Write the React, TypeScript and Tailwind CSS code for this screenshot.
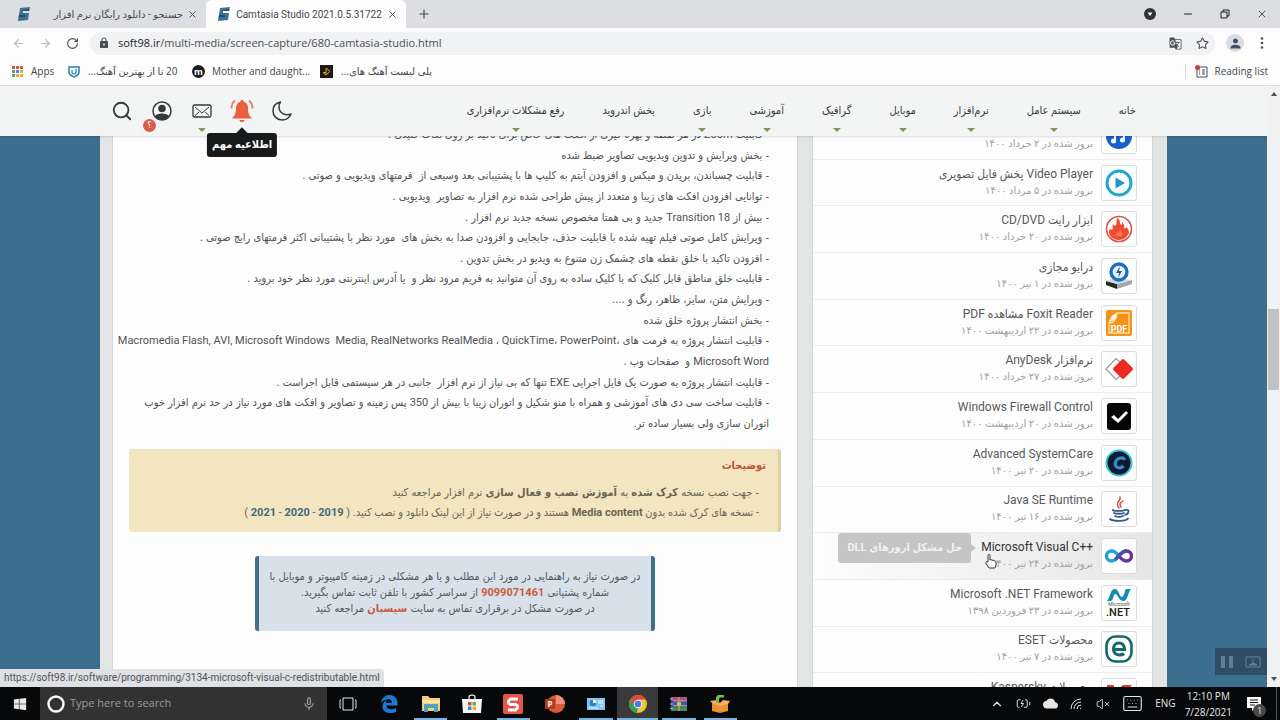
import type { ReactNode } from "react";
import {
  ArrowLeft,
  ArrowRight,
  BatteryCharging,
  ChevronUp,
  Keyboard,
  Minus,
  Plus,
  RotateCw,
  Search,
  Star,
  VolumeX,
  X,
} from "lucide-react";
import { FaWindows } from "react-icons/fa";
import { MdCloud, MdGTranslate, MdLock, MdMicNone, MdPerson } from "react-icons/md";

const menu = [
  { label: "خانه", hasSub: false },
  { label: "سیستم عامل", hasSub: true },
  { label: "نرم‌افزار", hasSub: true },
  { label: "موبایل", hasSub: true },
  { label: "گرافیک", hasSub: true },
  { label: "آموزشی", hasSub: true },
  { label: "بازی", hasSub: true },
  { label: "بخش اندروید", hasSub: false },
  { label: "رفع مشکلات نرم‌افزاری", hasSub: true },
];

function Latin({ children }: { children: ReactNode }) {
  return (
    <bdi dir="ltr" className="font-['Roboto','DejaVu_Sans_Condensed',sans-serif]">
      {children}
    </bdi>
  );
}

const features: ReactNode[] = [
  <>
    - قابلیت <Latin>Zoom</Latin> در هر نقطه و بهره گیری از افکت های خاص برای تاکید بر روی نکات کلیدی .
  </>,
  "- بخش ویرایش و تدوین ویدیویی تصاویر ضبط شده",
  "- قابلیت چسباندن، بریدن و میکس و افزودن آیتم به کلیپ ها با پشتیبانی بعد وسیعی از  فرمتهای ویدیویی و صوتی .",
  "- توانایی افزودن افکت های زیبا و متعدد از پیش طراحی شده نرم افزار به تصاویر  ویدیویی .",
  <>
    - بیش از <Latin>Transition 18</Latin> جدید و بی همتا مخصوص نسخه جدید نرم افزار .
  </>,
  "- ویرایش کامل صوتی فیلم تهیه شده با قابلیت حذف، جابجایی و افزودن صدا به بخش های  مورد نظر با پشتیبانی اکثر فرمتهای رایج صوتی .",
  "- افزودن تاکید با خلق نقطه های چشمک زن متنوع به ویدیو در بخش تدوین .",
  "- قابلیت خلق مناطق قابل کلیک که با کلیک ساده به روی آن متوانید به فریم مرود نظر و  یا آدرس اینترنتی مورد نظر خود بروید .",
  "- ویرایش متن، سایز، ظاهر، رنگ و ....",
  "- بخش انتشار پروژه خلق شده",
  <>
    - قابلیت انتشار پروژه به فرمت های{" "}
    <Latin>
      {"Macromedia Flash, AVI, Microsoft Windows  Media, RealNetworks RealMedia ، QuickTime، PowerPoint،"}
    </Latin>
  </>,
  <>
    <Latin>Microsoft Word</Latin>
    {" و  صفحات وب ."}
  </>,
  <>
    - قابلیت انتشار پروژه به صورت یک فایل اجرایی <Latin>EXE</Latin>
    {" تنها که بی نیاز از نرم افزار  جانبی در هر سیستمی قابل اجراست ."}
  </>,
  <>
    - قابلیت ساخت سی دی های آموزشی و همراه با منو شکیل و اتوران زیبا با بیش از <Latin>350</Latin>
    {" پس زمینه و تصاویر و افکت های مورد نیاز در حد نرم افزار خوب"}
  </>,
  "اتوران سازی ولی بسیار ساده تر.",
];

function MusicIcon() {
  return (
    <svg viewBox="0 0 28 28" className="size-7">
      <circle cx="14" cy="14" r="13" fill="#1a62cc" />
      <path d="M10 19V9l9-2v10" fill="none" stroke="#fff" strokeWidth="2" />
      <circle cx="8.500" cy="19" r="2.500" fill="#fff" />
      <circle cx="17.500" cy="18" r="2.500" fill="#fff" />
    </svg>
  );
}

function PlayerIcon() {
  return (
    <svg viewBox="0 0 28 28" className="size-7">
      <circle cx="14" cy="14" r="12" fill="#fff" stroke="#22a7cf" strokeWidth="3" />
      <path d="M10.500 8.500 20 14l-9.500 5.500z" fill="#2196c8" />
    </svg>
  );
}

function BurnIcon() {
  return (
    <svg viewBox="0 0 28 28" className="size-7">
      <circle cx="14" cy="14" r="12.500" fill="#fff" stroke="#d8524a" strokeWidth="1.600" />
      <path
        d="M4 18c0-2 0-3 1-4 1 1 2 1 3 0 0-2-1-3 0-5 1 2 2 2 3 1 1-2 0-4 1-7 4 2 2 5 4 7 1 0 1-1 1-3 2 2 3 4 2 6 1 1 2 0 2-1 2 1 3 4 3 6-2 4-5 7-10 7s-9-3-10-7z"
        fill="#ef4b30"
      />
      <path d="M10 21c0-2 2-2 2-4 1 0 1 1 2 1 1-1 0-2 1-3 2 2 3 3 2 6z" fill="#f37a62" />
    </svg>
  );
}

function DriveIcon() {
  return (
    <svg viewBox="0 0 28 28" className="size-7">
      <path d="M1 19 12 22v5L1 23z" fill="#1c2a2a" />
      <path d="m12 22 15-4v4l-15 5z" fill="#a2a8ac" />
      <path d="m1 19 9-3 17 2-15 4z" fill="#d3d7da" />
      <circle cx="14" cy="10" r="8" fill="#e9f6ff" stroke="#1671c4" strokeWidth="3.400" />
      <path d="m15 4-4 7h3l-1 5 4-7h-3z" fill="#1a5ea8" />
    </svg>
  );
}

function FoxitIcon() {
  return (
    <svg viewBox="0 0 28 28" className="size-7">
      <rect x="1" y="1" width="26" height="26" rx="2" fill="#f39215" />
      <path d="M12 4h12v20H4V14c5 0 8-4 8-10z" fill="none" stroke="#fde3b8" strokeWidth="1.300" />
      <path d="M4 13C5 8 8 5 12 4c0 5-3 8-8 9z" fill="#fff2dc" />
      <text x="14" y="23" textAnchor="middle" fontSize="9" fontWeight="700" fill="#fff" fontFamily="Roboto, sans-serif">
        PDF
      </text>
    </svg>
  );
}

function AnyDeskIcon() {
  return (
    <svg viewBox="0 0 28 28" className="size-7">
      <path d="M15 7 11 3.500 1 14l10 10.500 4-3.500" fill="none" stroke="#9a9a9a" strokeWidth="1.200" />
      <rect x="10.500" y="6.500" width="15" height="15" rx="2" transform="rotate(45 18 14)" fill="#ee2a24" />
    </svg>
  );
}

function FirewallIcon() {
  return (
    <svg viewBox="0 0 28 28" className="size-7">
      <rect x="2" y="1" width="24" height="27" rx="3" fill="#050505" />
      <path d="m6 15 3-2 4 4 8-8 2 2-10 10z" fill="#fff" />
    </svg>
  );
}

function SystemCareIcon() {
  return (
    <svg viewBox="0 0 28 28" className="size-7">
      <circle cx="14" cy="14" r="12.500" fill="#0c1a2c" stroke="#35c3e0" strokeWidth="2" />
      <path d="M19.500 11c-1-3-7-3-9 2-1.500 5 4 8 8 4" fill="none" stroke="#3a86d0" strokeWidth="3.200" />
    </svg>
  );
}

function JavaIcon() {
  return (
    <svg viewBox="0 0 28 28" className="size-7" fill="none" strokeLinecap="round">
      <path d="M15 2c2 4-6 5-1 11M18 6c-3 2-4 3-2 6" stroke="#d9453c" strokeWidth="1.500" />
      <path
        d="M8 15c-2 1 10 1.500 12 0M9 18c2 1 8 1 10 0M10 21c2 1 6 1 8 0M5 24c3 2.500 16 2.500 18-.5M21 15c4-1 3 4-1 5"
        stroke="#33588f"
        strokeWidth="1.800"
      />
    </svg>
  );
}

function VisualIcon() {
  return (
    <svg viewBox="0 0 28 28" className="size-7" fill="none" strokeWidth="3.400">
      <path d="M14 14c-3-4-5-5-7.500-5a5 5 0 0 0 0 10c2.500 0 4.500-1 7.500-5" stroke="#1fa5cf" />
      <path d="M14 14c3-4 5-5 7.500-5a5 5 0 0 1 0 10c-2.500 0-4.500-1-7.500-5" stroke="#68349a" />
      <path d="M10 17.500c4-3 6-8.500 11.500-8.500" stroke="#4a4fae" />
    </svg>
  );
}

function DotNetIcon() {
  return (
    <svg viewBox="0 0 28 30" direction="ltr" className="h-[30px] w-7">
      <path d="M2 13C5 10 5 2 9 1c5-1 5 8 8 8 3-1 2-6 4-8h5c-3 3-3 11-7 12-5 1-6-7-9-7-2 1-1 5-4 7z" fill="#1489b4" />
      <text x="14" y="18" textAnchor="middle" fontSize="5" fill="#555" fontFamily="Roboto, sans-serif">
        Microsoft
      </text>
      <text x="13" y="28" textAnchor="middle" fontSize="11" fontWeight="500" fill="#222" fontFamily="Roboto, sans-serif">
        .NET
      </text>
    </svg>
  );
}

function EsetIcon() {
  return (
    <svg viewBox="0 0 28 28" className="size-7">
      <rect x="1.500" y="1.500" width="25" height="25" rx="9" fill="#fff" stroke="#15686c" strokeWidth="2.600" />
      <path
        d="M9 14.500h10.500c0-4-2-6.500-5.500-6.500s-5.500 2.500-5.500 6 2.500 6 6 6c2 0 3.500-.5 4.500-1.500"
        fill="none"
        stroke="#15686c"
        strokeWidth="3.200"
      />
    </svg>
  );
}

function KasperskyIcon() {
  return (
    <svg viewBox="0 0 28 28" className="size-7">
      <path d="M2 3h7v8l9-8h9L16 14l11 11H2z" fill="#dc3b30" />
    </svg>
  );
}

const apps = [
  { title: "پخش موسیقی", date: "۲ خرداد ۱۴۰۰", icon: <MusicIcon /> },
  { title: "Video Player پخش فایل تصویری", date: "۵ مرداد ۱۴۰۰", icon: <PlayerIcon /> },
  { title: "ابزار رایت CD/DVD", date: "۲۰ خرداد ۱۴۰۰", icon: <BurnIcon /> },
  { title: "درایو مجازی", date: "۱ تیر ۱۴۰۰", icon: <DriveIcon /> },
  { title: "Foxit Reader مشاهده PDF", date: "۲۲ اردیبهشت ۱۴۰۰", icon: <FoxitIcon /> },
  { title: "نرم‌افزار AnyDesk", date: "۲۷ خرداد ۱۴۰۰", icon: <AnyDeskIcon /> },
  { title: "Windows Firewall Control", date: "۲۰ اردیبهشت ۱۴۰۰", icon: <FirewallIcon /> },
  { title: "Advanced SystemCare", date: "۲۰ تیر ۱۴۰۰", icon: <SystemCareIcon /> },
  { title: "Java SE Runtime", date: "۱۶ تیر ۱۴۰۰", icon: <JavaIcon /> },
  { title: "Microsoft Visual C++\u200e", date: "۲۴ تیر ۱۴۰۰", icon: <VisualIcon />, tip: "حل مشکل ارورهای DLL" },
  { title: "Microsoft .NET Framework", date: "۲۳ فروردین ۱۳۹۸", icon: <DotNetIcon /> },
  { title: "محصولات ESET", date: "۷ تیر ۱۴۰۰", icon: <EsetIcon /> },
  { title: "محصولات Kaspersky", date: "۷ تیر ۱۴۰۰", icon: <KasperskyIcon /> },
];

function SoftLogo() {
  return (
    <svg viewBox="0 0 14 14" className="size-[14px] shrink-0">
      <path d="M3 1 13 0l-1 4H6v2h6l-1 7-10 1 .5-4H8V8H2z" fill="#3d7291" />
      <path d="M6 4h6l.5-2-6 1zM8 8v2H1.500L2 8z" fill="#234f6c" />
    </svg>
  );
}

function TabBar() {
  return (
    <div className="flex h-7 shrink-0 items-center bg-[#dcdee2] text-[10px] text-[#45484c]">
      <div className="flex h-full w-[206px] items-center justify-between pl-[17px] pr-2">
        <SoftLogo />
        <div className="flex items-center gap-1">
          <span dir="rtl" className="whitespace-nowrap font-['Roboto','DejaVu_Sans',sans-serif]">
            جستجو - دانلود رایگان نرم افزار
          </span>
          <button aria-label="Close tab">
            <X className="size-[11px]" />
          </button>
        </div>
      </div>
      <div className="flex h-full w-[200px] items-center justify-between rounded-t-md bg-[#fdfdfd] pl-[11px] pr-2">
        <SoftLogo />
        <span className="whitespace-nowrap font-['Roboto',sans-serif]">Camtasia Studio 2021.0.5.31722</span>
        <button aria-label="Close tab">
          <X className="size-[11px]" />
        </button>
      </div>
      <button aria-label="New tab" className="ml-[11px]">
        <Plus className="size-[14px]" />
      </button>
      <div className="ml-auto flex items-center gap-[26px] pr-3 text-[#1d1f22]">
        <button aria-label="Search tabs">
          <svg viewBox="0 0 12 12" className="size-3">
            <circle cx="6" cy="6" r="6" fill="#2f3236" />
            <path d="M3.500 4.500h5L6 8z" fill="#fff" />
          </svg>
        </button>
        <button aria-label="Minimize">
          <Minus className="size-3" strokeWidth={2} />
        </button>
        <button aria-label="Restore">
          <svg viewBox="0 0 10 10" className="size-[10px]" fill="none" stroke="currentColor">
            <path d="M1 3h6v6H1zM3 3V1h6v6H7" />
          </svg>
        </button>
        <button aria-label="Close window">
          <X className="size-3" strokeWidth={1.5} />
        </button>
      </div>
    </div>
  );
}

function Toolbar() {
  return (
    <div className="flex h-[30px] shrink-0 items-center bg-[#fdfdfd] pl-3 text-[#4b4e52]">
      <div className="flex gap-[14px]">
        <button aria-label="Back" className="text-[#b5b7ba]">
          <ArrowLeft className="size-[13px]" />
        </button>
        <button aria-label="Forward" className="text-[#b5b7ba]">
          <ArrowRight className="size-[13px]" />
        </button>
        <button aria-label="Reload">
          <RotateCw className="size-[13px]" />
        </button>
      </div>
      <div className="ml-[11px] flex h-[23px] flex-1 items-center gap-2 rounded-full bg-[#f1f2f3] pl-2 pr-[6px]">
        <MdLock className="size-3" />
        <div className="flex-1 text-[11px]">
          <span className="text-[#222427]">soft98.ir</span>/multi-media/screen-capture/680-camtasia-studio.html
        </div>
        <MdGTranslate className="mr-[6px] size-[13px]" />
        <Star className="size-[13px]" />
      </div>
      <div className="ml-[11px] flex size-[18px] items-center justify-center rounded-full bg-[#d9dde6]">
        <MdPerson className="size-[15px] text-[#454f66]" />
      </div>
      <svg viewBox="0 0 4 12" className="ml-4 mr-4 h-3 w-1" fill="#4b4e52">
        <circle cx="2" cy="1.500" r="1.300" />
        <circle cx="2" cy="6" r="1.300" />
        <circle cx="2" cy="10.500" r="1.300" />
      </svg>
    </div>
  );
}

function Bookmarks() {
  const dots = ["#d9564a", "#d9564a", "#d9564a", "#55a865", "#4b87d8", "#e3b341", "#55a865", "#e3b341", "#e3b341"];
  return (
    <div className="flex h-7 shrink-0 items-center border-b border-[#dcdddf] bg-[#fdfdfd] px-3 text-[10px] text-[#45484c]">
      <a href="#apps" className="flex w-14 items-center gap-2">
        <span className="grid grid-cols-3 gap-px">
          {dots.map((color, i) => (
            <span key={i} className="size-[3px]" style={{ backgroundColor: color }} />
          ))}
        </span>
        Apps
      </a>
      <a href="#best" className="flex w-[124px] items-center gap-2">
        <svg viewBox="0 0 12 12" className="size-3 shrink-0" fill="none" stroke="#3278b5" strokeWidth="1.500">
          <path d="M1 1h10v5c0 3-3 4-5 5-2-1-5-2-5-5z" />
          <path d="M4 4v2c0 2 2 3 4 1V3" stroke="#2ea4c9" />
        </svg>
        <span dir="rtl" className="whitespace-nowrap">
          20 تا از بهترین آهنگ...
        </span>
      </a>
      <a href="#mother" className="flex w-32 items-center gap-[7px]">
        <span className="flex size-[13px] shrink-0 items-center justify-center rounded-full bg-[#1c1c1e] text-[9px] font-bold leading-none text-white">
          m
        </span>
        <span className="whitespace-nowrap">Mother and daught...</span>
      </a>
      <a href="#playlist" className="flex items-center gap-2">
        <svg viewBox="0 0 13 13" className="size-[13px] shrink-0">
          <path d="M0 0h13v13H0z" fill="#1b1a14" />
          <path d="M6 10V3l4 3.500L6 10 3 7.500h3" fill="none" stroke="#d3a928" />
        </svg>
        <span dir="rtl" className="whitespace-nowrap">
          پلی لیست آهنگ های...
        </span>
      </a>
      <div className="ml-auto flex items-center gap-[6px] border-l border-[#d5d6d8] pl-[9px]">
        <svg viewBox="0 0 13 13" className="size-[13px]" fill="none" stroke="#4b4e52">
          <path d="M2 2h10v10H2zM7 5h3M7 7h3M7 9h3M4 5h1M4 7h1M4 9h1" />
          <circle cx="2.500" cy="2.500" r="2.500" fill="#c1453a" stroke="none" />
        </svg>
        Reading list
      </div>
    </div>
  );
}

function Caret() {
  return (
    <svg viewBox="0 0 8 4" className="absolute bottom-1 left-1/2 h-1 w-2 -translate-x-1/2">
      <path d="M0 0h8L4 4z" fill="#7d9a4c" />
    </svg>
  );
}

function SiteHeader() {
  return (
    <header className="relative z-10 flex h-[50px] shrink-0 items-center justify-between bg-[#f3f4f4] pl-[102px] pr-[131px] text-[#36393c] shadow">
      <div className="flex h-full">
        <button aria-label="جستجو" className="flex w-10 items-center justify-center">
          <Search className="size-[22px]" strokeWidth={2} />
        </button>
        <button aria-label="حساب کاربری" className="relative flex w-10 items-center justify-center">
          <svg viewBox="0 0 20 20" className="size-5">
            <circle cx="10" cy="10" r="9" fill="#fbfbfb" stroke="#36393c" strokeWidth="1.500" />
            <circle cx="10" cy="7.500" r="3.800" fill="#36393c" />
            <path d="M3 15.500c1-4 13-4 14 0-3 4.500-11 4.500-14 0z" fill="#36393c" />
          </svg>
          <span className="absolute bottom-1 left-px flex size-[13px] items-center justify-center rounded-full bg-[#dc5a4e] text-[9px] leading-none text-white">
            ؟
          </span>
        </button>
        <button aria-label="پیام" className="relative flex w-10 items-center justify-center">
          <svg viewBox="0 0 20 14" className="h-[14px] w-5" fill="none" stroke="#36393c">
            <rect x="1" y="1" width="18" height="12" rx="1.500" strokeWidth="1.300" />
            <path d="m3 3 7 6 7-6M3 11.500 7 8M17 11.500 13 8" />
          </svg>
          <Caret />
        </button>
        <button aria-label="اطلاعیه مهم" className="relative flex w-10 items-center justify-center">
          <svg viewBox="0 0 24 24" className="size-6" fill="#e8603c">
            <path d="M12 1c1 0 1.500.6 1.500 1.500 3 .8 4.500 3.500 4.500 6.500 0 5 1 7.500 3.500 9.500v1h-19v-1C5 16.500 6 14 6 9c0-3 1.500-5.700 4.500-6.500C10.500 1.600 11 1 12 1zM9.500 21h5c-.3 3-4.700 3-5 0z" />
            <path d="M5 1.500C2.500 3.500 1.500 6 1.500 9.500M19 1.500c2.500 2 3.500 4.500 3.500 8" fill="none" stroke="#dd8577" strokeWidth="2" />
          </svg>
          <span className="absolute left-1/2 top-[47px] -translate-x-1/2 whitespace-nowrap rounded-[3px] bg-[#17191b] px-[5px] text-[11px] font-bold leading-6 text-white">
            <span className="absolute -top-1 left-1/2 size-2 -translate-x-1/2 rotate-45 bg-[#17191b]" />
            <span className="relative">اطلاعیه مهم</span>
          </span>
        </button>
        <button aria-label="حالت شب" className="flex w-10 items-center justify-center">
          <svg viewBox="0 0 20 20" className="size-5" fill="none" stroke="#36393c" strokeWidth="1.500" strokeLinejoin="round">
            <path d="M8.500 1C4 2 1 5.500 1 10c0 5 4 9 9 9 4 0 7.500-2.500 9-6-6 2-11.500-1-12-6.500C6.800 4 7.500 2.300 8.500 1z" />
          </svg>
        </button>
      </div>
      <nav dir="rtl" className="flex h-full gap-[38px] text-[11px]">
        {menu.map((item) => (
          <a key={item.label} href="#menu" className="relative flex items-center whitespace-nowrap">
            {item.label}
            {item.hasSub && <Caret />}
          </a>
        ))}
      </nav>
    </header>
  );
}

function Article() {
  return (
    <main
      dir="rtl"
      className="min-w-0 flex-1 border-x border-[#d4d6d6] bg-[#fdfdfd] px-4 font-['DejaVu_Sans_Condensed','DejaVu_Sans',sans-serif] text-[11px] text-[#505255]"
    >
      <div className="-mt-[11px] flex h-[309px] flex-col justify-between pr-3 leading-5">
        {features.map((line, i) => (
          <p key={i} className="whitespace-pre">
            {line}
          </p>
        ))}
      </div>

      <section className="mt-[15px] h-[83px] rounded-[3px] border-r-3 border-[#ddd0a4] bg-[#f3e5c0] pr-3 pt-[7px] leading-5 text-[#6b6454]">
        <h2 className="font-bold text-[#be5638]">توضیحات</h2>
        <p className="mt-[7px] pr-[7px]">
          - جهت نصب نسخه <b>کرک شده</b> به <b>آموزش نصب و فعال سازی</b> نرم افزار مراجعه کنید
        </p>
        <p className="pr-[7px] font-['Roboto','DejaVu_Sans_Condensed',sans-serif]">
          - نسخه های کرک شده بدون <b>Media content</b> هستند و در صورت نیاز از این لینک دانلود و نصب کنید. ({" "}
          <a href="#2019" className="font-bold text-[#3d6a7d]">2019</a> -{" "}
          <a href="#2020" className="font-bold text-[#3d6a7d]">2020</a> -{" "}
          <a href="#2021" className="font-bold text-[#3d6a7d]">2021</a> )
        </p>
      </section>

      <section className="mx-auto mt-6 w-[400px] rounded-[3px] border-x-4 border-[#41708f] bg-[#d8e0e9] pb-[14px] pt-[13px] text-center leading-4 text-[#505862]">
        <p>در صورت نیاز به راهنمایی در مورد این مطلب و یا هر مشکلی در زمینه کامپیوتر و موبایل با</p>
        <p>
          شماره پشتیانی{" "}
          <b className="text-[#cc593f]">
            <Latin>9099071461</Latin>
          </b>{" "}
          از سراسر کشور با تلفن ثابت تماس بگیرید.
        </p>
        <p>
          در صورت مشکل در برقراری تماس به سایت{" "}
          <a href="#sisban" className="font-bold text-[#cc593f]">سیسبان</a> مراجعه کنید
        </p>
      </section>
    </main>
  );
}

function Sidebar() {
  return (
    <aside dir="rtl" className="w-[341px] shrink-0 border-x border-[#d4d6d6] bg-[#fdfdfd]">
      <ul className="-mt-[23px] flex h-[607px] flex-col">
        {apps.map((app) => (
          <li
            key={app.title}
            className={
              app.tip
                ? "relative flex flex-1 items-center gap-2 border-b border-[#ececec] bg-linear-to-l from-[#e6e6e6] to-[#fdfdfd] pr-[15px]"
                : "relative flex flex-1 items-center gap-2 border-b border-[#ececec] pr-[15px]"
            }
          >
            <div className="flex size-9 items-center justify-center rounded-[3px] border border-[#dcdcdc] bg-white">
              {app.icon}
            </div>
            <a href="#app" className="whitespace-nowrap pb-[2px]">
              <div className={app.tip ? "text-xs leading-[18px] text-[#333]" : "text-xs leading-[18px] text-[#58595b]"}>
                {app.title}
              </div>
              <div className="font-['Roboto','DejaVu_Sans',sans-serif] text-[10px] leading-4 text-[#a0a0a0]">
                بروز شده در {app.date}
              </div>
            </a>
            {app.tip && (
              <>
                <div className="absolute right-[181px] top-0 rounded-[3px] bg-[#c5c5c5] px-[9px] text-[11px] font-bold leading-[30px] text-[#f1f1f1]">
                  {app.tip}
                  <svg viewBox="0 0 5 8" className="absolute -right-[5px] top-[11px] h-2 w-[5px]">
                    <path d="M0 0v8l5-4z" fill="#c5c5c5" />
                  </svg>
                </div>
                <svg viewBox="0 0 14 16" className="absolute right-[154px] top-5 h-4 w-[14px]">
                  <path
                    d="M4 9V2.500c0-1.500 2-1.500 2 0V7c1-.8 2-.4 2 .5 1-.6 2-.2 2 .6 1-.5 2 0 2 1V12l-1 3H5L2 10.500C1 9 3 8 4 9z"
                    fill="#fff"
                    stroke="#333"
                  />
                </svg>
              </>
            )}
          </li>
        ))}
      </ul>
    </aside>
  );
}

const taskIcons = [
  {
    name: "Task View",
    line: false,
    icon: (
      <svg viewBox="0 0 18 14" className="h-[14px] w-[18px]" fill="none" stroke="#e8e8e8">
        <path d="M4 1h10v12H4zM2 3H1v8h1M16 3h1v8h-1" />
      </svg>
    ),
  },
  {
    name: "Edge",
    line: false,
    icon: (
      <svg viewBox="0 0 18 18" className="size-[18px]">
        <path
          d="M1 8C2 3 5 0 9.500 0 15 0 18 4 17.500 10.500H6.500c0 4 5.500 5 9.500 2.500v4C10 19.500 2 18 2.500 11 2.700 8 4.500 6 7 5c-.8 1-1 1.800-1 2.700h6c0-5-7.500-4.500-11 .3z"
          fill="#1d78d6"
        />
      </svg>
    ),
  },
  {
    name: "File Explorer",
    line: true,
    icon: (
      <svg viewBox="0 0 20 18" className="h-[18px] w-5">
        <path d="M1 1h6l2 2h10v13H1z" fill="#f4d179" />
        <path d="M3 9h14v8h-4v-4H7v4H3z" fill="#4fa3bd" />
        <path d="M1 5h18v3H1z" fill="#fbe5a3" />
      </svg>
    ),
  },
  {
    name: "Store",
    line: false,
    icon: (
      <svg viewBox="0 0 20 20" className="size-5">
        <path d="M7 5V3c0-2.500 6-2.500 6 0v2" fill="none" stroke="#eee" strokeWidth="1.300" />
        <path d="M0 5h20l-1 14H1z" fill="#f7f7f7" />
        <path d="M6 8h3.500v3.500H6z" fill="#d6532f" />
        <path d="M10.500 8H14v3.500h-3.500z" fill="#7aab3c" />
        <path d="M6 12.500h3.500V16H6z" fill="#2f8ccb" />
        <path d="M10.500 12.500H14V16h-3.500z" fill="#eab23a" />
      </svg>
    ),
  },
  {
    name: "Snagit",
    line: true,
    icon: (
      <svg viewBox="0 0 20 20" className="size-5">
        <rect width="20" height="20" rx="2" fill="#e2574a" />
        <path d="M15 5H7.500L5.500 7v2l2 1.500h5l2 1.500v2l-2 2H5" fill="none" stroke="#fff" strokeWidth="2.800" />
      </svg>
    ),
  },
  {
    name: "PowerPoint",
    line: false,
    icon: (
      <svg viewBox="0 0 20 18" className="h-[18px] w-5">
        <circle cx="11" cy="9" r="9" fill="#d95a3a" />
        <path d="M11 0a9 9 0 0 1 9 9h-9z" fill="#f0907a" />
        <rect y="4" width="10" height="10" rx="1" fill="#b93a20" />
        <text x="5" y="12" textAnchor="middle" fontSize="8" fontWeight="700" fill="#fff" fontFamily="Open Sans, sans-serif">
          P
        </text>
      </svg>
    ),
  },
  {
    name: "Control Panel",
    line: true,
    icon: (
      <svg viewBox="0 0 18 12" className="h-3 w-[18px]">
        <path d="M0 0h18v12H0z" fill="#83c7ee" />
        <circle cx="6" cy="5" r="3.300" fill="#2d7fc4" />
        <path d="M6 5V1.500A3.500 3.500 0 0 1 9.500 5z" fill="#f1f7fb" />
        <path d="M11 3h5M11 5h5M2 10h9M13 8h3" stroke="#eef7fc" />
      </svg>
    ),
  },
  {
    name: "Chrome",
    line: true,
    icon: (
      <svg viewBox="0 0 18 18" className="size-[18px]">
        <circle cx="9" cy="9" r="9" fill="#f3c237" />
        <path d="M9 9 5.100 11.300 1.200 4.500A9 9 0 0 1 16.800 4.500H9z" fill="#db4a3d" />
        <path d="M1.200 4.500 5.500 11.500 9 13l-1.200 5A9 9 0 0 1 1.200 4.500z" fill="#3a9b54" />
        <circle cx="9" cy="9" r="4.300" fill="#f7f7f7" />
        <circle cx="9" cy="9" r="3.300" fill="#3f7ee0" />
      </svg>
    ),
  },
  {
    name: "WinRAR",
    line: true,
    icon: (
      <svg viewBox="0 0 18 16" className="h-[14px] w-[18px]" preserveAspectRatio="none">
        <path d="M1 0h16v5H1z" fill="#b14b8c" />
        <path d="M1 5h16v6H1z" fill="#3c57a8" />
        <path d="M1 11h16v5H1z" fill="#3f8a63" />
        <path d="M0 2h3M0 8h3M0 13h3M3 4.500h14M3 10h14" stroke="#c9b8d8" />
        <path d="M8 0h2v16H8z" fill="#b58a5a" />
        <path d="M7 6h4v4H7z" fill="#e0c04a" />
      </svg>
    ),
  },
  {
    name: "Camtasia",
    line: true,
    icon: (
      <svg viewBox="0 0 20 19" className="h-[19px] w-5">
        <path d="M2 9h16v8l-8 2-8-2z" fill="#e8923a" />
        <path d="m2 9-2-2 7-1 3 3 3-3 7 1-2 3-8 2z" fill="#f4b05c" />
        <path d="M6 9V3l2-2h6v2.500h-4L9 5v4" fill="#7dbb3e" />
      </svg>
    ),
  },
];

function Taskbar() {
  return (
    <footer className="flex h-[33px] shrink-0 items-center bg-[#060809] text-[#e6e6e6]">
      <button aria-label="Start" className="flex w-10 justify-center">
        <FaWindows className="size-[14px]" />
      </button>
      <label className="flex h-full w-[287px] items-center gap-[5px] bg-[#323233] pl-[7px] pr-[10px]">
        <svg viewBox="0 0 18 18" className="size-[18px] shrink-0">
          <circle cx="9" cy="9" r="7.500" fill="none" stroke="#fff" strokeWidth="2.400" />
        </svg>
        <input
          aria-label="Search"
          placeholder="Type here to search"
          className="min-w-0 flex-1 bg-transparent text-[11px] outline-none placeholder:text-[#9b9b9b]"
        />
        <MdMicNone className="size-4 text-[#9b9b9b]" />
      </label>
      <div className="flex h-full w-[414px]">
        {taskIcons.map((item) => (
          <button
            key={item.name}
            aria-label={item.name}
            className={
              item.name === "Chrome"
                ? "relative flex h-full flex-1 items-center justify-center bg-[#3a3a3d]"
                : "relative flex h-full flex-1 items-center justify-center"
            }
          >
            {item.icon}
            {item.line && (
              <span
                className={
                  item.name === "Chrome"
                    ? "absolute inset-x-0 bottom-0 h-[2px] bg-[#79b3e0]"
                    : "absolute inset-x-1 bottom-0 h-[2px] bg-[#79b3e0]"
                }
              />
            )}
          </button>
        ))}
      </div>
      <div className="ml-auto flex h-full items-center">
        <ChevronUp className="size-[14px]" />
        <BatteryCharging className="ml-3 size-[15px]" strokeWidth={1.5} />
        <MdCloud className="ml-3 size-[15px]" />
        <svg viewBox="0 0 12 12" className="ml-3 size-3" fill="none" stroke="currentColor">
          <path d="M1 11A10 10 0 0 1 11 1M4 11a7 7 0 0 1 7-7M7 11a4 4 0 0 1 4-4M10 11l1-1" />
        </svg>
        <VolumeX className="ml-[14px] size-[14px]" strokeWidth={1.5} />
        <Keyboard className="ml-3 size-[21px]" strokeWidth={1.3} />
        <span className="ml-3 text-[10px]">ENG</span>
        <div className="ml-[9px] text-center text-[10px] leading-4">
          <div>12:10 PM</div>
          <div>7/28/2021</div>
        </div>
        <div className="relative ml-[15px] mr-[11px]">
          <svg viewBox="0 0 14 14" className="size-[14px]">
            <path d="M0 0h14v11H8l-3 3v-3H0z" fill="#fff" />
            <path d="M3 3h8M3 5.500h8M3 8h5" stroke="#111" />
          </svg>
          <span className="absolute -bottom-[6px] left-[6px] flex size-[13px] items-center justify-center rounded-full bg-[#4a4a4a] text-[9px] leading-none">
            1
          </span>
        </div>
        <div className="ml-1 h-full w-1 border-l border-[#555]" />
      </div>
    </footer>
  );
}

export default function App() {
  return (
    <div className="flex h-screen w-full flex-col overflow-hidden font-['Open_Sans','DejaVu_Sans',sans-serif]">
      <TabBar />
      <Toolbar />
      <Bookmarks />

      <div className="relative flex min-h-0 flex-1 bg-[#3c6e8e] font-['Roboto','DejaVu_Sans_Condensed','DejaVu_Sans',sans-serif]">
        <div className="flex min-w-0 flex-1 flex-col">
          <SiteHeader />
          <div className="mx-[100px] flex min-h-0 flex-1 gap-[14px] overflow-hidden bg-[#e3e4e4] pl-3 pr-[14px]">
            <Article />
            <Sidebar />
          </div>
        </div>

        {/* Scrollbar */}
        <div className="relative z-10 flex w-[13px] flex-col items-center justify-between bg-[#f1f1f1] py-[6px]">
          <svg viewBox="0 0 6 4" className="h-1 w-[6px]">
            <path d="M0 4h6L3 0z" fill="#505050" />
          </svg>
          <div className="absolute inset-x-px top-[223px] h-[81px] bg-[#c1c1c1]" />
          <svg viewBox="0 0 6 4" className="h-1 w-[6px]">
            <path d="M0 0h6L3 4z" fill="#505050" />
          </svg>
        </div>

        <div className="absolute bottom-3 right-[13px] flex h-[27px] w-[52px] items-center justify-center gap-3 bg-[#2b4a5f]/90">
          <svg viewBox="0 0 12 12" className="size-3" fill="#64808f">
            <path d="M0 0h4v12H0zM8 0h4v12H8z" />
          </svg>
          <svg viewBox="0 0 16 12" className="h-3 w-4" fill="none" stroke="#64808f">
            <path d="M1 1h14v10H1z" />
            <path d="M8 3v4M4 9l4-2 4 2z" fill="#64808f" />
          </svg>
        </div>

        <div className="absolute bottom-0 left-0 rounded-tr-[3px] bg-[#dfe1e5] px-1 text-[10px] leading-[18px] text-[#505357]">
          https://soft98.ir/software/programming/3134-microsoft-visual-c-redistributable.html
        </div>
      </div>

      <Taskbar />
    </div>
  );
}
